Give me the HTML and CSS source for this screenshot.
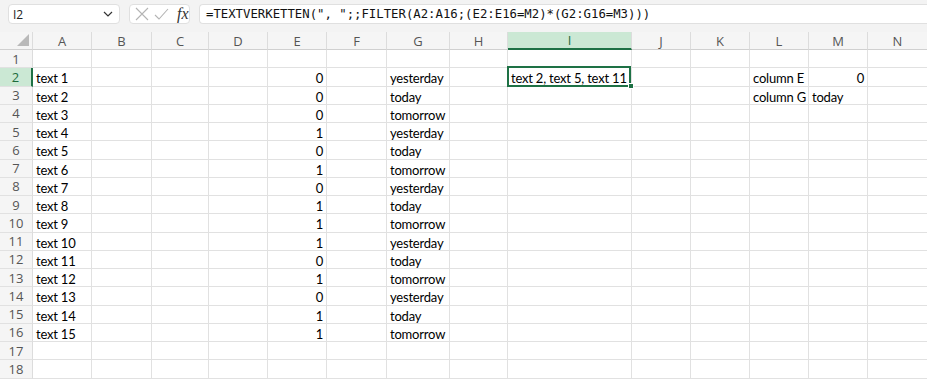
FILE: index.html
```html
<!DOCTYPE html>
<html lang="de">
<head>
  <meta charset="UTF-8">
  <title>TEXTVERKETTEN FILTER</title>
  <link rel="stylesheet" href="styles.css">
</head>
<body>
<div class="toolbar">
  <div class="namebox">
    <span>I2</span>
    <svg class="chevron" width="10" height="6" viewBox="0 0 10 6"><path d="M1 1 L5 5 L9 1" fill="none" stroke="#333" stroke-width="1.2"/></svg>
  </div>
  <div class="fxbox">
    <svg width="14" height="14" viewBox="0 0 14 14"><path d="M1 1 L13 13 M13 1 L1 13" stroke="#b4b4b4" stroke-width="1.1" fill="none"/></svg>
    <svg width="15" height="14" viewBox="0 0 15 14"><path d="M1 8 L5 12 L14 2" stroke="#b4b4b4" stroke-width="1.1" fill="none"/></svg>
    <span class="fx">fx</span>
  </div>
  <div class="formula">=TEXTVERKETTEN(", ";;FILTER(A2:A16;(E2:E16=M2)*(G2:G16=M3)))</div>
</div>

<div class="sheet" id="sheet"></div>

<script>
  const cols = ["A", "B", "C", "D", "E", "F", "G", "H", "I", "J", "K", "L", "M", "N"];
  const flags = [0, 0, 0, 1, 0, 1, 0, 1, 1, 1, 0, 1, 0, 1, 1];
  const days = ["yesterday", "today", "tomorrow"];

  const cells = {};
  for (let i = 0; i < 15; i++) {
    cells["A" + (i + 2)] = { text: "text " + (i + 1) };
    cells["E" + (i + 2)] = { text: flags[i], num: true };
    cells["G" + (i + 2)] = { text: days[i % 3] };
  }
  cells["I2"] = { text: "text 2, text 5, text 11", active: true };
  cells["L2"] = { text: "column E" };
  cells["M2"] = { text: 0, num: true };
  cells["L3"] = { text: "column G" };
  cells["M3"] = { text: "today" };

  const sheet = document.getElementById("sheet");
  let html = '<div class="corner"><svg width="12" height="12" viewBox="0 0 12 12"><polygon points="12,0 12,12 0,12" fill="#b9b9b9"/></svg></div>';
  cols.forEach(c => {
    html += `<div class="colhead${c === "I" ? " selected" : ""}">${c}</div>`;
  });
  for (let r = 1; r <= 18; r++) {
    html += `<div class="rowhead${r === 2 ? " selected" : ""}">${r}</div>`;
    cols.forEach(c => {
      const cell = cells[c + r];
      let cls = "cell";
      if (cell && cell.num) cls += " num";
      if (cell && cell.active) cls += " active";
      html += `<div class="${cls}">${cell ? cell.text : ""}</div>`;
    });
  }
  sheet.innerHTML = html;
</script>
</body>
</html>
```

FILE: styles.css
```css
body {
  margin: 0;
  background-color: white;
  color: black;
  font-family: Lato, "Open Sans", sans-serif;
  overflow: hidden;
}
.toolbar {
  height: 32px;
  box-sizing: border-box;
  background-color: #f3f3f3;
  display: flex;
  align-items: flex-start;
  padding: 4px 0 0 8px;
  gap: 9px;
}
.namebox,
.fxbox,
.formula {
  height: 20px;
  box-sizing: border-box;
  background-color: white;
  border: 1px solid #e0e0e0;
  border-radius: 4px;
  display: flex;
  align-items: center;
}
.namebox {
  width: 112px;
  justify-content: space-between;
  padding: 0 6px 0 4px;
  font-family: "Open Sans", sans-serif;
  font-size: 12px;
  color: #222;
}
.fxbox {
  width: 61px;
  gap: 5px;
  padding-left: 5px;
}
.fx {
  font-family: "Liberation Serif", serif;
  font-style: italic;
  font-size: 16px;
  color: #333;
  margin-left: 3px;
  line-height: 1;
}
.formula {
  flex: 1;
  border-right: none;
  border-radius: 4px 0 0 4px;
  padding-left: 6px;
  font-family: "DejaVu Sans Mono", monospace;
  font-size: 12.3px;
  color: #111;
  white-space: nowrap;
}
.sheet {
  display: grid;
  grid-template-columns: 33px 59px 60px 57px 59px 59px 60px 63px 58px 124px 59px 59px 59px 59px 60px;
  grid-template-rows: 18px repeat(18, 18.25px);
}
.corner,
.colhead,
.rowhead {
  background-color: #f5f5f5;
  color: #555;
  font-family: "Open Sans", sans-serif;
  font-size: 13px;
  box-sizing: border-box;
  border-right: 1px solid #dcdcdc;
  border-bottom: 1px solid #d0d0d0;
  display: flex;
  align-items: center;
  justify-content: center;
}
.corner {
  justify-content: flex-end;
  align-items: flex-end;
  padding: 0 3px 3px 0;
}
.colhead.selected {
  background-color: #cbe8d4;
  color: #1e6b3c;
  border-bottom: 2px solid #1e7145;
}
.rowhead {
  border-bottom-color: #e1e1e1;
}
.rowhead.selected {
  background-color: #cbe8d4;
  color: #1e6b3c;
  border-right: 2px solid #1e7145;
}
.cell {
  box-sizing: border-box;
  border-right: 1px solid #e1e1e1;
  border-bottom: 1px solid #e1e1e1;
  padding: 2px 3px 0 3px;
  font-size: 13px;
  letter-spacing: -0.2px;
  line-height: 17px;
  white-space: nowrap;
  position: relative;
}
.cell.num {
  text-align: right;
}
.cell.active::after {
  content: "";
  position: absolute;
  top: -2px;
  left: -1px;
  right: 0;
  bottom: -1px;
  border: 2px solid #1e7145;
}
.cell.active::before {
  content: "";
  position: absolute;
  right: -3px;
  bottom: -3px;
  width: 4px;
  height: 4px;
  background-color: #1e7145;
  border: 1px solid white;
  z-index: 1;
}
```
